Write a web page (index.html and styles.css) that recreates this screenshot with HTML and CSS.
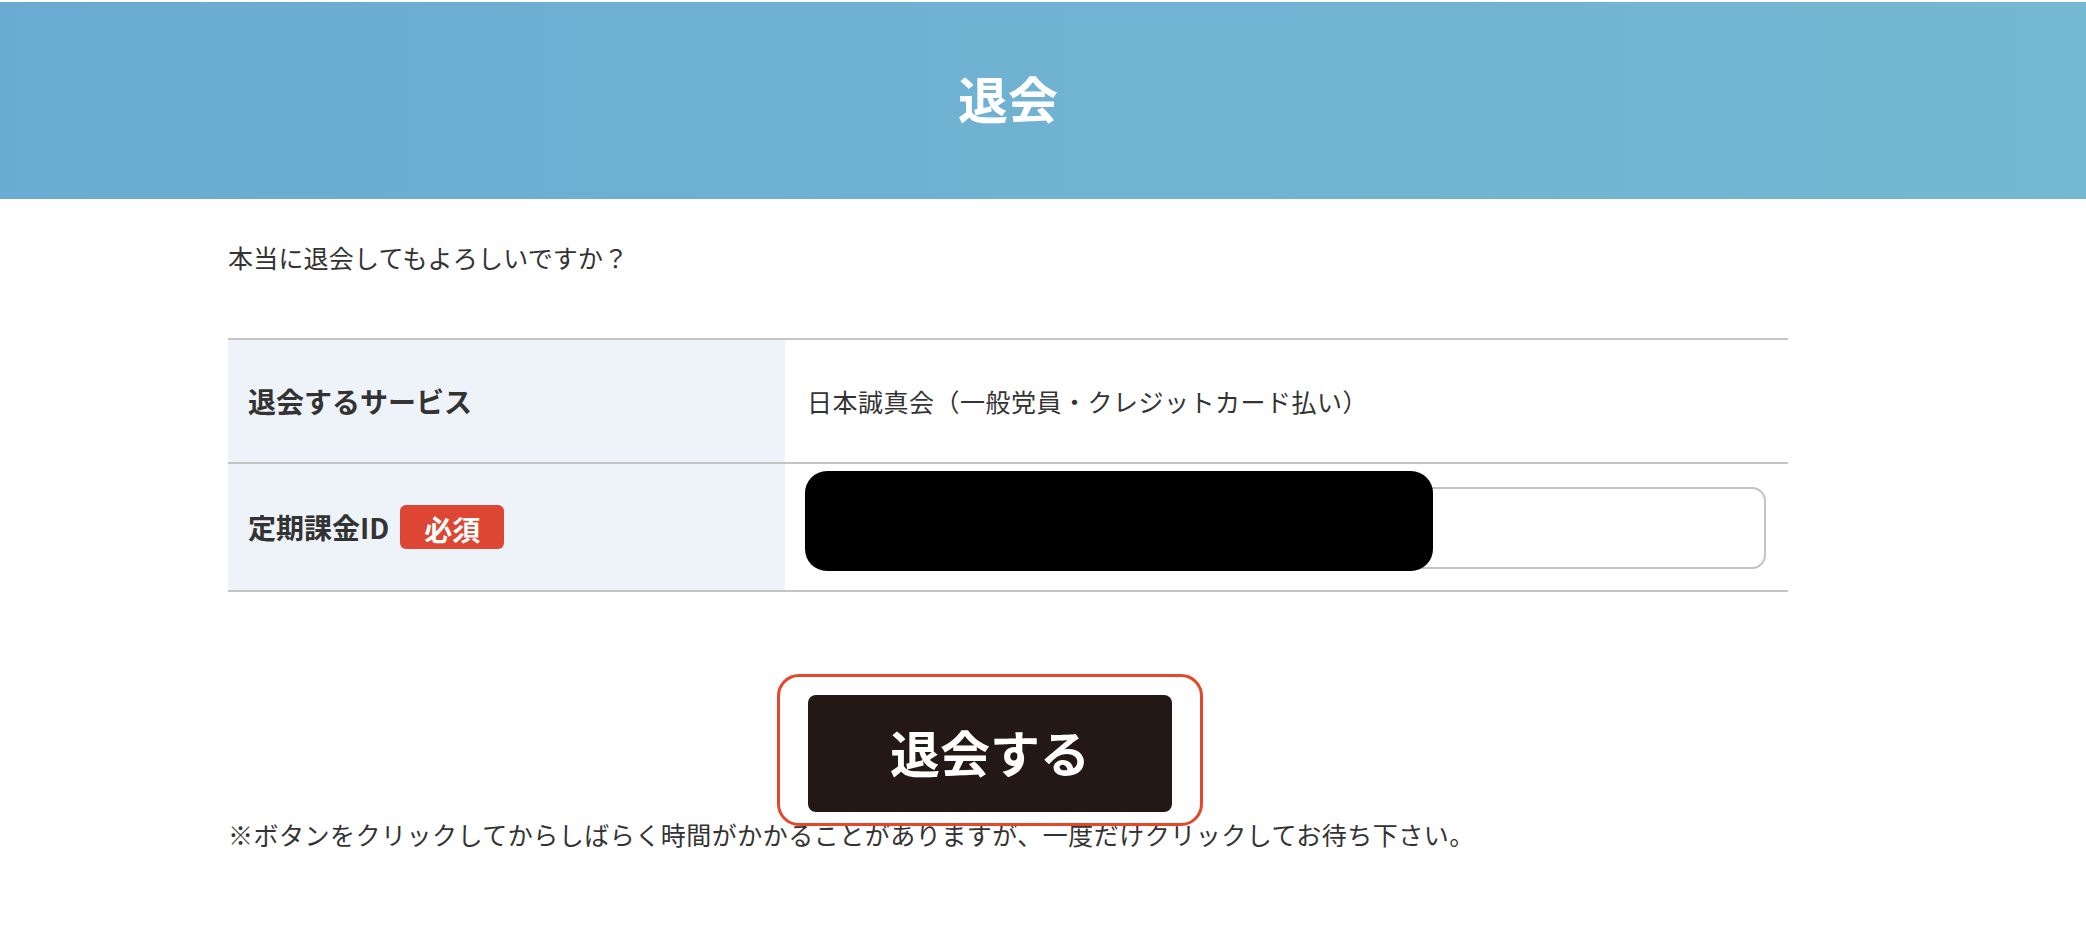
FILE: index.html
```html
<!DOCTYPE html>
<html lang="ja">
<head>
<meta charset="utf-8">
<title>退会</title>
<link rel="stylesheet" href="styles.css">
</head>
<body>
<header class="hero">
  <div class="wrap">
    <h1 class="hero-title">退会</h1>
  </div>
</header>
<main class="wrap">
  <p class="lead">本当に退会してもよろしいですか？</p>
  <div class="form-table">
    <div class="row row-service">
      <div class="label">退会するサービス</div>
      <div class="value">日本誠真会（一般党員・クレジットカード払い）</div>
    </div>
    <div class="row row-id">
      <div class="label">定期課金ID<span class="badge">必須</span></div>
      <div class="value value-input">
        <input class="text-input" type="text" value="">
        <div class="redact"></div>
      </div>
    </div>
  </div>
  <div class="actions">
    <div class="btn-holder">
      <button class="btn-submit" type="button">退会する</button>
      <span class="highlight"></span>
    </div>
  </div>
  <p class="note">※ボタンをクリックしてからしばらく時間がかかることがありますが、一度だけクリックしてお待ち下さい。</p>
</main>
</body>
</html>
```
FILE: styles.css
```css
* { box-sizing: border-box; }

html, body {
  margin: 0;
  background: #fff;
}

body {
  padding-top: 2px;
  font-family: "Noto Sans CJK JP", "Noto Sans", sans-serif;
  color: #333;
}

.wrap {
  width: 1560px;
  margin-left: 228px;
}

.hero {
  height: 197px;
  background: linear-gradient(90deg, #6aacd1 0%, #74b8d3 100%);
  display: flex;
  align-items: center;
}

.hero-title {
  margin: 0;
  padding-bottom: 7px;
  text-align: center;
  color: #fff;
  font-size: 50px;
  font-weight: 700;
  line-height: 1.2;
}

.lead {
  margin: 40px 0 0;
  font-size: 25px;
  line-height: 1.5;
  letter-spacing: 0.2px;
}

.form-table {
  margin-top: 61px;
  border-top: 2px solid #c4c4c4;
}

.row {
  display: flex;
  border-bottom: 2px solid #c4c4c4;
}

.row-service { height: 124px; }
.row-id { height: 128px; }

.label {
  width: 557px;
  flex: none;
  background: #eef3fa;
  padding-left: 20px;
  display: flex;
  align-items: center;
  font-size: 28px;
  font-weight: 700;
  color: #333;
}

.badge {
  margin-left: 11px;
  height: 44px;
  width: 104px;
  display: inline-flex;
  align-items: center;
  justify-content: center;
  padding-top: 4px;
  background: #dc4632;
  color: #fff;
  border-radius: 6px;
  font-size: 28px;
  font-weight: 700;
}

.value {
  flex: 1;
  padding: 0 22px;
  display: flex;
  align-items: center;
  font-size: 25px;
  letter-spacing: 0.5px;
  color: #333;
}

.value-input {
  position: relative;
}

.text-input {
  width: 100%;
  height: 82px;
  margin-top: 2px;
  border: 2px solid #c4c4c4;
  border-radius: 14px;
  background: #fff;
  font-size: 25px;
  padding: 0 20px;
  outline: none;
}

.redact {
  position: absolute;
  left: 20px;
  top: 7px;
  width: 628px;
  height: 100px;
  background: #000;
  border-radius: 22px;
}

.actions {
  margin-top: 103px;
  display: flex;
  justify-content: center;
  padding-right: 36px;
}

.btn-holder {
  position: relative;
}

.btn-submit {
  display: block;
  width: 364px;
  height: 117px;
  border: none;
  border-radius: 8px;
  background: #231815;
  color: #fff;
  font-family: "Noto Sans CJK JP", "Noto Sans", sans-serif;
  font-size: 50px;
  font-weight: 700;
  padding: 0 0 5px;
  cursor: pointer;
}

.highlight {
  position: absolute;
  left: -31px;
  right: -31px;
  top: -21px;
  bottom: -14px;
  border: 3px solid #e8462b;
  border-radius: 22px;
  pointer-events: none;
}

.note {
  margin: 4px 0 0;
  font-size: 25px;
  line-height: 1.5;
  letter-spacing: 0.5px;
}
```
